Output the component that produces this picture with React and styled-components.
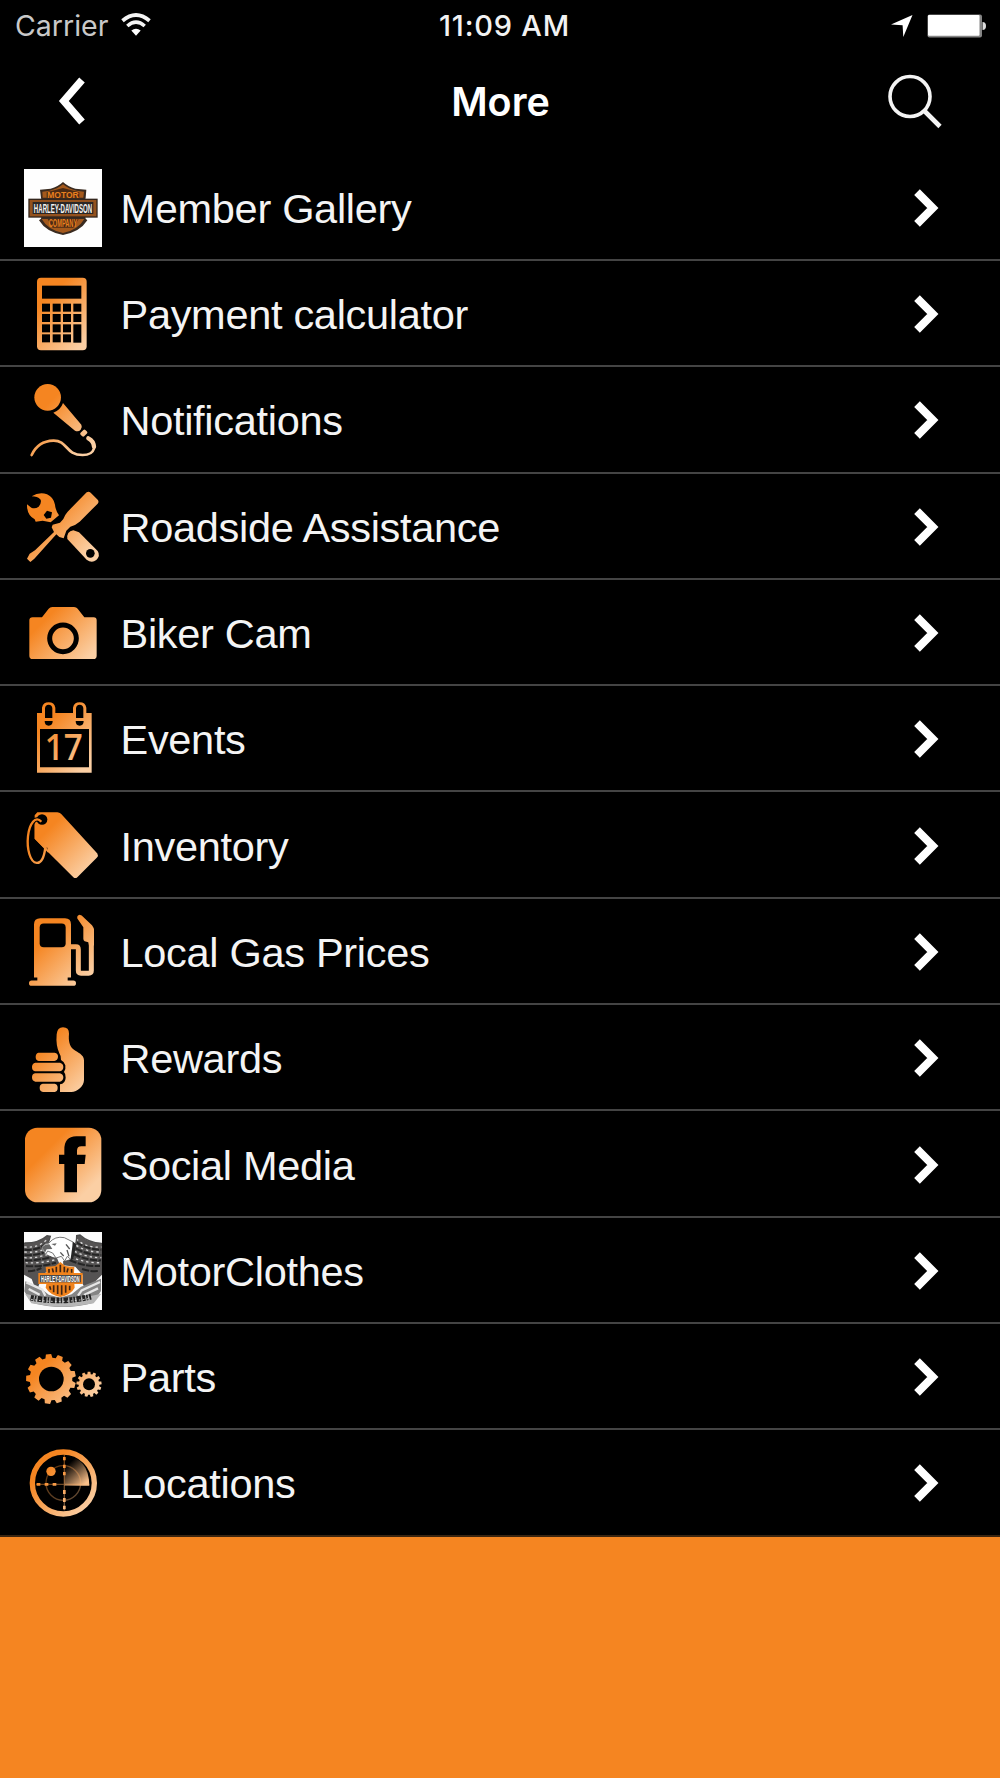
import styled, { createGlobalStyle } from 'styled-components';

const GlobalStyle = createGlobalStyle`
	body {
		margin: 0;
		background: #f58521;
	}
	* {
		box-sizing: border-box;
	}
`;

const Screen = styled.div`
	width: 1000px;
	height: 1778px;
	overflow: hidden;
	background: #f58521;
	font-family: 'Liberation Sans', Arial, sans-serif;
`;

const StatusBar = styled.header`
	display: grid;
	grid-template-columns: 1fr auto 1fr;
	align-items: center;
	height: 50px;
	padding: 0 13px 0 15px;
	background: #000;
	font-family: Inter, sans-serif;
	line-height: 50px;
	svg {
		display: block;
	}
`;

const Carrier = styled.div`
	display: flex;
	align-items: center;
	gap: 13px;
	padding-top: 1px;
	color: #c9c9c9;
	font-size: 28.5px;
	svg {
		margin-bottom: 2px;
	}
`;

const Clock = styled.div`
	margin-left: 7px;
	padding-top: 1px;
	color: #f2f2f2;
	font-size: 29px;
	font-weight: 500;
	letter-spacing: 0.8px;
`;

const StatusIcons = styled.div`
	display: flex;
	justify-content: flex-end;
	align-items: center;
	gap: 14px;
`;

const NavBar = styled.nav`
	display: grid;
	grid-template-columns: 1fr auto 1fr;
	align-items: center;
	height: 104.7px;
	padding: 0 58px;
	background: #000;
	h1 {
		margin: 0 0 0 1px;
		color: #fff;
		font-family: Inter, sans-serif;
		font-size: 39.5px;
		font-weight: 600;
		line-height: 104px;
	}
`;

const NavButton = styled.button`
	display: flex;
	justify-self: ${({ $side }) => $side};
	padding: 0 0 2px;
	border: 0;
	background: none;
`;

const Menu = styled.ul`
	margin: 0;
	padding: 0;
	list-style: none;
	background: #000;
`;

const MenuRow = styled.li`
	display: flex;
	align-items: center;
	height: 106.3px;
	padding: 2px 61px 0 24px;
	border-bottom: 2px solid #444;
	.row-icon {
		flex: none;
		width: 78px;
		height: 78px;
	}
	.row-chevron {
		flex: none;
	}
	&:last-child {
		border-bottom-color: #3a2511;
	}
`;

const Label = styled.span`
	flex: 1;
	padding: 2px 0 0 18.5px;
	color: #f4f4f4;
	font-size: 41.5px;
	letter-spacing: -0.3px;
	white-space: nowrap;
`;

// Every icon is drawn on a 234 unit square whose top edge is at `top`
const Icon = ({ id, top, children }) => (
	<svg className='row-icon' viewBox={`72 ${top} 234 234`}>
		<defs>
			<linearGradient
				id={id}
				gradientUnits='userSpaceOnUse'
				x1='72'
				y1={top}
				x2='306'
				y2={top + 234}
			>
				<stop offset='0.3' stopColor='#f58521' />
				<stop offset='0.82' stopColor='#fbcfa4' />
			</linearGradient>
		</defs>
		<g fill={`url(#${id})`}>{children}</g>
	</svg>
);

// Condensed bold lettering for the badge logos
const BadgeText = ({ x, y, size, squeeze, fill, children }) => (
	<text
		transform={`translate(${x} ${y}) scale(${squeeze} 1)`}
		fill={fill}
		fontFamily='Liberation Sans, Arial, sans-serif'
		fontSize={size}
		fontWeight='700'
		textAnchor='middle'
	>
		{children}
	</text>
);

const gearPath = (cx, cy, outer, root, teeth, turn) => {
	const step = (Math.PI * 2) / teeth;
	const points = [];
	for (let i = 0; i < teeth; i++) {
		const a = turn + i * step;
		[
			[root, -0.34],
			[outer, -0.22],
			[outer, 0.22],
			[root, 0.34],
		].forEach(([r, k]) => {
			const x = cx + r * Math.cos(a + k * step);
			const y = cy + r * Math.sin(a + k * step);
			points.push(`${x.toFixed(1)} ${y.toFixed(1)}`);
		});
	}
	return `M${points.join('L')}Z`;
};

const ShieldIcon = () => (
	<Icon id='shield' top={56}>
		<rect x='72' y='56' width='234' height='234' fill='#fefefe' />
		<path
			d='M189 95Q204 109 226 115L259 118L257 142L251 173L257 205L262 210Q240 245 189 254Q138 245 117 210L123 205L129 173L123 142L120 118L152 115Q174 109 189 95Z'
			fill='#3a2b20'
		/>
		<path
			d='M189 102Q206 116 229 121L252 124L250 142H128L127 124L149 121Q172 116 189 102ZM125 206H253Q234 239 189 248Q144 239 125 206Z'
			fill='#a4591c'
		/>
		<path d='M140 126L189 113L238 126V142H140ZM143 206H236L220 232H158Z' fill='#4a2a14' />
		<BadgeText x={189} y={142} size={29} squeeze={0.88} fill='#e8801f'>
			MOTOR
		</BadgeText>
		<BadgeText x={189} y={230} size={32} squeeze={0.53} fill='#e8801f'>
			COMPANY
		</BadgeText>
		<rect x='87' y='147' width='204' height='53' fill='#93511d' stroke='#33261d' strokeWidth='4' />
		<rect x='98' y='155' width='182' height='36' fill='#2b2725' />
		<BadgeText x={189} y={187} size={38} squeeze={0.48} fill='#f4f2f0'>
			HARLEY-DAVIDSON
		</BadgeText>
	</Icon>
);

const CalculatorIcon = () => (
	<Icon id='calculator' top={375}>
		<rect x='111' y='383' width='149' height='218' rx='12' />
		<g fill='#000'>
			<rect x='126' y='407' width='118' height='39' />
			{[461, 492, 523, 553].map((y, row) =>
				[126, 158, 189, 220].map((x, col) =>
					row > 1 && col === 3 ? null : (
						<rect key={`${x}-${y}`} x={x} y={y} width='24' height='24' />
					)
				)
			)}
			<rect x='220' y='523' width='24' height='55' />
		</g>
	</Icon>
);

const MicrophoneIcon = () => (
	<Icon id='microphone' top={46}>
		<circle cx='143' cy='95' r='40' />
		<path d='M189 112Q182 133 160 141L225 195Q235 200 242 192Q248 185 244 177Z' />
		<rect x='241' y='195' width='20' height='15' rx='4' transform='rotate(-45 251 202)' />
		<path
			d='M95 268C108 240 128 226 160 225C204 224 195 268 248 268C287 268 293 235 266 217'
			fill='none'
			stroke='url(#microphone)'
			strokeWidth='8'
			strokeLinecap='round'
		/>
		<path
			d='M265 218Q281 226 282 243'
			fill='none'
			stroke='url(#microphone)'
			strokeWidth='13'
			strokeLinecap='round'
		/>
	</Icon>
);

const ToolsIcon = () => (
	<Icon id='tools' top={365}>
		<path d='M95 390Q118 376 141 384Q160 392 165 415Q166 431 177 447L152 468L128 463L107 466L104 459Q80 446 81 414L94 424Q105 429 116 421Q125 412 122 400Q112 390 95 390Z' />
		<path d='M141 433L156 438L153 454L139 457L131 446Z' fill='#000' />
		<path d='M260 378Q266 374 272 379L293 400Q298 406 293 412L239 466Q228 476 211 481L199 493L191 516L178 512L169 504L103 577L91 587L81 577L89 562L105 552L162 497L155 483L158 475L180 469L190 458Q194 446 203 436Z' />
		<path d='M220 492Q199 496 202 518L260 580Q275 592 289 581Q302 568 293 554L237 498Z' />
		<circle cx='271' cy='561' r='13' fill='#000' />
	</Icon>
);

const CameraIcon = () => (
	<Icon id='camera' top={42}>
		<path d='M98 112H126L146 86Q150 81 157 81H222Q229 81 233 86L253 112H281Q290 112 290 121V227Q290 237 280 237H98Q88 237 88 227V121Q88 112 98 112Z' />
		<circle cx='189' cy='175' r='40' fill='none' stroke='#000' strokeWidth='15' />
	</Icon>
);

const CalendarIcon = () => (
	<Icon id='calendar' top={361}>
		<path d='M111 400H275V579H111Z' />
		<path d='M120 448H267V563H120Z' fill='#000' />
		<path d='M126 400H166V384Q163 368 146 368Q129 368 126 384ZM219 400H259V384Q256 368 239 368Q222 368 219 384Z' />
		<g fill='#000'>
			<path d='M135 415V386Q136 375 146 375Q156 375 157 386V415ZM228 415V386Q229 375 239 375Q249 375 250 386V415Z' />
			<path d='M134 424H158Q158 438 146 438Q134 438 134 424ZM227 424H251Q251 438 239 438Q227 438 227 424Z' />
		</g>
		<text
			x='191'
			y='540'
			fontFamily='Open Sans, sans-serif'
			fontSize='106'
			fontWeight='600'
			textAnchor='middle'
			textLength='114'
			lengthAdjust='spacingAndGlyphs'
		>
			17
		</text>
	</Icon>
);

const TagIcon = () => (
	<Icon id='tag' top={43.5}>
		<path d='M112 59H172Q178 59 183 64L292 183Q296 190 291 195L232 254Q226 259 220 254L104 139V68Z' />
		<circle cx='126' cy='81' r='16' fill='#000' />
		<path
			d='M136 165Q130 213 110 211C90 210 80 168 84 131C88 94 107 67 124 88'
			fill='none'
			stroke='#000'
			strokeWidth='13'
		/>
		<path
			d='M136 165Q130 213 110 211C90 210 80 168 84 131C88 94 107 67 124 88'
			fill='none'
			stroke='url(#tag)'
			strokeWidth='7'
		/>
		<path d='M104 95L116 102L146 182L104 139Z' />
	</Icon>
);

const GasPumpIcon = () => (
	<Icon id='pump' top={362.5}>
		<path d='M121 378H195Q213 378 213 397V556H203V565H220Q228 565 228 573Q228 581 220 581H95Q87 581 87 573Q87 565 95 565H112V556H102V397Q102 378 121 378Z' />
		<rect x='119' y='394' width='78' height='71' rx='12' fill='#000' />
		<path
			d='M211 464H228Q235 464 235 472V535Q235 543 243 543H266Q274 543 274 535V410'
			fill='none'
			stroke='url(#pump)'
			strokeWidth='15'
		/>
		<path d='M232 379Q230 370 239 368L245 370L276 399Q282 406 282 415V460H267L265 450L254 447Q250 445 250 440V405Z' />
	</Icon>
);

const ThumbIcon = () => (
	<Icon id='thumb' top={42}>
		<path d='M170 88Q172 67 189 67Q207 67 207 86C205 107 208 122 220 133C233 143 252 149 252 166V225C252 244 232 261 214 261H180V238Q196 236 197 218Q198 207 192 201Q198 193 196 181Q193 170 183 165Q183 151 178 145Q167 121 170 88Z' />
		<path d='M115 143H164Q175 145 174 156Q173 167 163 168H116Q107 167 107 156Q107 145 115 143ZM106 173H180Q190 176 190 186Q190 196 180 199H105Q96 197 96 186Q96 175 106 173ZM105 205H180Q190 208 190 217Q190 227 180 230H106Q96 228 96 217Q96 207 105 205ZM128 236H164Q173 238 173 248Q173 259 164 261H129Q119 259 119 248Q119 238 128 236Z' />
	</Icon>
);

const FacebookIcon = () => (
	<Icon id='facebook' top={361}>
		<rect x='75' y='366' width='229' height='224' rx='37' />
		<path
			d='M193 560V475H177V447H193V433Q192 393 229 392H257V422H244Q231 422 231 435V447H257L254 475H231V560Z'
			fill='#000'
		/>
	</Icon>
);

const EagleIcon = () => (
	<Icon id='eagle' top={47}>
		<rect x='72' y='47' width='234' height='234' fill='#fbfbfb' />
		{/* wings */}
		<path
			d='M72 80Q113 82 141 58L151 60L143 88L131 105Q143 121 171 125L180 147L136 169L119 201L109 225L95 188L72 175ZM306 80Q267 82 240 56L229 60L225 91L215 128L189 135L190 147L226 151L248 176V203L260 224L281 200L306 175Z'
			fill='#555353'
		/>
		<g fill='none' stroke='#d8d8d8' strokeWidth='4' strokeDasharray='7 9'>
			<path d='M73 92Q116 96 140 70M73 107Q112 111 137 96M73 124Q109 127 145 113M77 139Q115 142 163 131' />
			<path d='M229 68Q258 96 304 92M229 87Q260 108 304 107M224 105Q260 124 304 124M213 121Q255 141 302 139' />
		</g>
		<g fill='none' stroke='#242424' strokeWidth='6' strokeDasharray='22 4'>
			<path d='M73 100Q111 104 137 83M73 116Q111 119 139 105M75 132Q112 134 153 122M78 149Q121 153 168 139M84 165Q107 164 124 155' />
			<path d='M228 77Q264 101 304 100M227 96Q264 117 304 116M220 113Q263 134 303 132M209 131Q250 151 300 149M246 158Q273 167 296 164' />
		</g>
		<path d='M73 80Q115 81 141 58L151 60L143 86M229 83L230 58L240 56Q265 79 305 81' fill='none' stroke='#4b4b4b' strokeWidth='4' />
		{/* head */}
		<path
			d='M126 98Q126 83 147 80Q165 58 193 64L219 77L221 105L213 130L202 120L194 134L184 120L168 125L158 110L143 104L137 114Z'
			fill='#fff'
			stroke='#777'
			strokeWidth='3'
		/>
		<path d='M127 95Q132 83 148 84L157 98L140 99L135 109ZM154 83L170 81L165 88Z' fill='#666' />
		<path d='M198 84L209 98M201 101L207 120M181 108L191 119' stroke='#555' strokeWidth='4' />
		<path d='M219 76L229 84L220 127L211 134Z' fill='#252525' />
		{/* tail and ribbon */}
		<path
			d='M76 195L117 211L146 235L180 244L215 234L243 211L303 187V224L279 260Q187 284 94 259L73 225Z'
			fill='#858585'
		/>
		<path d='M79 198L127 220L136 238M86 218L119 235M300 197L245 222L234 238M294 216L252 236' stroke='#e6e6e6' strokeWidth='7' fill='none' />
		<path d='M75 232Q187 261 304 232L281 261Q187 281 94 261Z' fill='#b7b7b7' />
		<path
			d='M92 244Q183 262 273 241'
			fill='none'
			stroke='#222'
			strokeWidth='17'
			strokeDasharray='9 3 5 4 14 4'
		/>
		<path d='M93 249Q183 263 270 246' fill='none' stroke='#ddd' strokeWidth='3' strokeDasharray='5 7' />
		{/* shield */}
		<path
			d='M181 137L196 149L223 152L222 170H248V203H223L224 214Q213 235 181 242Q149 235 137 214L139 203H115V170H139L137 152L166 149Z'
			fill='#f0831d'
		/>
		<path
			d='M147 158V169M157 156L160 168M169 151V168M181 145V168M193 151V168M204 156L201 168M215 158V169M149 210L152 220M161 207V228M173 207V233M185 207V235M197 207V229M209 208V222'
			stroke='#3d2415'
			strokeWidth='5'
		/>
		<rect x='120' y='176' width='123' height='22' fill='#4a4a4a' />
		<BadgeText x={181} y={196} size={26} squeeze={0.465} fill='#fff'>
			HARLEY-DAVIDSON
		</BadgeText>
	</Icon>
);

const GearsIcon = () => (
	<Icon id='gears' top={42}>
		<path d={gearPath(153, 165, 75, 64, 13, -1.67)} />
		<path d={gearPath(267, 181, 38, 31, 13, -1.57)} />
		<circle cx='154' cy='165' r='37' fill='#000' />
		<circle cx='267' cy='181' r='18' fill='#000' />
	</Icon>
);

const RadarIcon = () => (
	<Icon id='radar' top={361}>
		<defs>
			<linearGradient id='sweep' x1='0' y1='0' x2='0.75' y2='1'>
				<stop offset='0.25' stopColor='#f9b77c' stopOpacity='0' />
				<stop offset='1' stopColor='#fbc18b' />
			</linearGradient>
		</defs>
		<path d='M193 396Q267 401 268 486H193Z' fill='url(#sweep)' />
		<g fill='none' stroke='url(#radar)'>
			<circle cx='190' cy='478' r='93' strokeWidth='16' />
			<circle cx='190' cy='478' r='52' strokeWidth='4' opacity='0.38' />
			<path d='M193 394V560M108 482H268' strokeWidth='4' opacity='0.45' />
			<path
				d='M193 400V410M193 423V433M193 445V455M193 499V511M193 523V535M193 546V557M110 482H121M134 482H145M158 482H169'
				strokeWidth='8'
			/>
		</g>
		<circle cx='153' cy='443' r='14' />
	</Icon>
);

const items = [
	{ label: 'Member Gallery', icon: ShieldIcon },
	{ label: 'Payment calculator', icon: CalculatorIcon },
	{ label: 'Notifications', icon: MicrophoneIcon },
	{ label: 'Roadside Assistance', icon: ToolsIcon },
	{ label: 'Biker Cam', icon: CameraIcon },
	{ label: 'Events', icon: CalendarIcon },
	{ label: 'Inventory', icon: TagIcon },
	{ label: 'Local Gas Prices', icon: GasPumpIcon },
	{ label: 'Rewards', icon: ThumbIcon },
	{ label: 'Social Media', icon: FacebookIcon },
	{ label: 'MotorClothes', icon: EagleIcon },
	{ label: 'Parts', icon: GearsIcon },
	{ label: 'Locations', icon: RadarIcon },
];

const App = () => {
	return (
		<>
			<GlobalStyle />
			<Screen>
				<StatusBar>
					<Carrier>
						Carrier
						<svg width='30' height='24' viewBox='0 0 30 24' fill='none'>
							<path d='M1.5 7.8Q15-3.8 28.5 7.8' stroke='#f4f4f4' strokeWidth='3.8' />
							<path d='M6.3 13Q15 5.4 23.7 13' stroke='#f4f4f4' strokeWidth='3.6' />
							<path d='M10.3 17.6Q15 13.8 19.7 17.6L15 22.8Z' fill='#fff' />
						</svg>
					</Carrier>
					<Clock>11:09 AM</Clock>
					<StatusIcons>
						<svg width='22' height='22' viewBox='0 0 22 22'>
							<path d='M21.5 0L12.3 22L11.6 10.2L0 9.4Z' fill='#fff' />
						</svg>
						<svg width='60' height='24' viewBox='0 0 60 24'>
							<rect x='0.5' y='0.5' width='54.5' height='23' rx='2' fill='#858585' />
							<rect x='1' y='1' width='51.5' height='20.7' rx='1' fill='#fff' />
							<path d='M55.5 8Q59 8 59 12Q59 16 55.5 16Z' fill='#ddd' />
						</svg>
					</StatusIcons>
				</StatusBar>
				<NavBar>
					<NavButton $side='start' aria-label='Back'>
						<svg width='28' height='50' viewBox='0 0 28 50'>
							<path
								d='M24 4L5.8 25L24 46'
								fill='none'
								stroke='#fff'
								strokeWidth='7.4'
							/>
						</svg>
					</NavButton>
					<h1>More</h1>
					<NavButton $side='end' aria-label='Search'>
						<svg width='54' height='55' viewBox='0 0 54 55' fill='none' stroke='#f4f4f4'>
							<circle cx='22' cy='22.5' r='20' strokeWidth='3.6' />
							<path d='M36.5 37L52 52.5' strokeWidth='4.6' />
						</svg>
					</NavButton>
				</NavBar>
				<Menu>
					{items.map(({ label, icon: RowIcon }) => (
						<MenuRow key={label}>
							<RowIcon />
							<Label>{label}</Label>
							<svg className='row-chevron' width='25' height='38' viewBox='0 0 25 38'>
								<path
									d='M3 3.2L18.8 19L3 34.8'
									fill='none'
									stroke='#fff'
									strokeWidth='8'
								/>
							</svg>
						</MenuRow>
					))}
				</Menu>
			</Screen>
		</>
	);
};

export default App;
